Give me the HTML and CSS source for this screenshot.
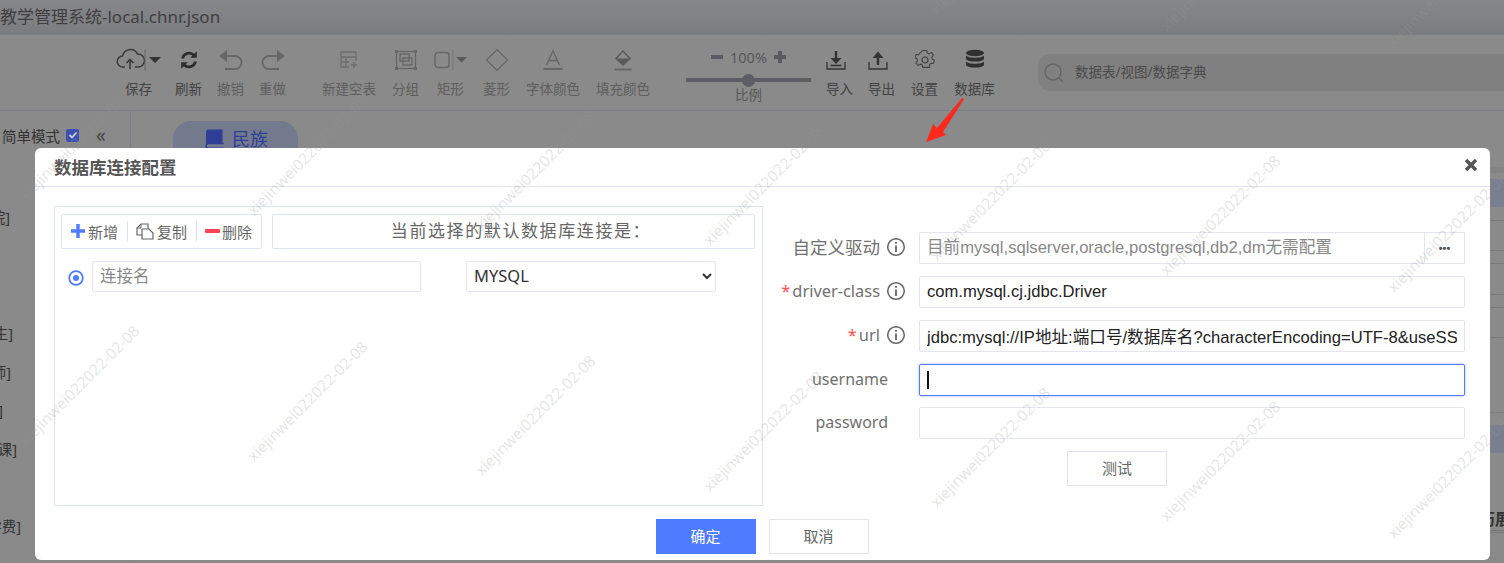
FILE: index.html
```html
<!DOCTYPE html>
<html lang="zh-CN">
<head>
<meta charset="utf-8">
<title>数据库连接配置</title>
<link rel="stylesheet" href="styles.css">
</head>
<body>
<div class="app">
  <header class="titlebar">教学管理系统-local.chnr.json</header>
  <section class="toolbar">
    <div class="tool tool-n strong">
      <span class="ico"><svg width="46" height="24" viewBox="0 0 46 24"><path d="M9 19H7a5.5 5.5 0 0 1-.5-11A8 8 0 0 1 21.5 6a6.5 6.5 0 0 1 1 13H19" fill="none" stroke="#3a3a3a" stroke-width="1.5"/><path d="M14 21v-9M10.5 15l3.5-3.5 3.5 3.5" fill="none" stroke="#3a3a3a" stroke-width="1.6"/><path d="M29 1.5v21" stroke="#666" stroke-width="1"/><path d="M33 9h12l-6 6z" fill="#333"/></svg></span>保存
    </div>
    <div class="tool tool-n strong gap-23">
      <span class="ico"><svg width="20" height="20" viewBox="0 0 20 20"><path d="M3.5 8.5A6.8 6.8 0 0 1 15 5.2" fill="none" stroke="#2e2e2e" stroke-width="2.8"/><path d="M17.8 1.2v6.6h-6.6z" fill="#2e2e2e"/><path d="M16.5 11.5A6.8 6.8 0 0 1 5 14.8" fill="none" stroke="#2e2e2e" stroke-width="2.8"/><path d="M2.2 18.8v-6.6h6.6z" fill="#2e2e2e"/></svg></span>刷新
    </div>
    <div class="tool tool-n">
      <span class="ico"><svg width="26" height="22" viewBox="0 0 26 22"><path d="M2 7h15a6.5 6.5 0 0 1 0 13H7" fill="none" stroke="#666" stroke-width="1.8"/><path d="M9 1 1.5 7 9 13z" fill="#666"/></svg></span>撤销
    </div>
    <div class="tool tool-n">
      <span class="ico"><svg width="26" height="22" viewBox="0 0 26 22"><path d="M24 7H9a6.5 6.5 0 0 0 0 13h10" fill="none" stroke="#666" stroke-width="1.8"/><path d="M17 1l7.5 6L17 13z" fill="#666"/></svg></span>重做
    </div>
    <div class="tool tool-w gap-34">
      <span class="ico"><svg width="20" height="20" viewBox="0 0 20 20"><path d="M10 17H2V2h15v9M2 7h15M2 12h8M7 7v10" fill="none" stroke="#6e6e6e" stroke-width="1.3"/><path d="M15 12v6M12 15h6" stroke="#6e6e6e" stroke-width="1.4"/></svg></span>新建空表
    </div>
    <div class="tool tool-n">
      <span class="ico"><svg width="24" height="22" viewBox="0 0 24 22"><rect x="2.5" y="2.5" width="19" height="17" fill="none" stroke="#666" stroke-width="1.2"/><rect x="6" y="5" width="9" height="7" fill="none" stroke="#666" stroke-width="1.3"/><rect x="9" y="9" width="9" height="7" fill="none" stroke="#666" stroke-width="1.3"/><path d="M1 1h3v3H1zM20 1h3v3h-3zM1 18h3v3H1zM20 18h3v3h-3z" fill="#666"/></svg></span>分组
    </div>
    <div class="tool tool-n gap-18">
      <span class="ico"><svg width="34" height="22" viewBox="0 0 34 22"><rect x="1" y="3.5" width="14" height="15" rx="3" fill="none" stroke="#666" stroke-width="1.4"/><path d="M19 1v20" stroke="#777"/><path d="M22 8h11l-5.500 5.500z" fill="#5a5a5a"/></svg></span>矩形
    </div>
    <div class="tool tool-n gap-19">
      <span class="ico"><svg width="24" height="24" viewBox="0 0 24 24"><path d="M12 1.500 22.500 12 12 22.500 1.500 12z" fill="none" stroke="#666" stroke-width="1.2"/></svg></span>菱形
    </div>
    <div class="tool tool-w gap-15">
      <span class="ico"><svg width="22" height="22" viewBox="0 0 22 22"><path d="M4.500 16 11 2l6.500 14M6.500 11.500h9" fill="none" stroke="#666" stroke-width="1.4"/><path d="M1.500 20h19" stroke="#666" stroke-width="2"/></svg></span>字体颜色
    </div>
    <div class="tool tool-w gap-14">
      <span class="ico"><svg width="20" height="22" viewBox="0 0 20 22"><path d="M10 2 3 9.500l7 6.500 7-6.500z" fill="none" stroke="#5a5a5a" stroke-width="1.4"/><path d="M3.500 9.500h13L10 16z" fill="#5a5a5a"/><path d="M1.500 20.500h17" stroke="#666" stroke-width="2"/></svg></span>填充颜色
    </div>
    <div class="zoomer">
      <div class="zoom-top"><span class="zoom-sign"></span><span>100%</span><span class="zoom-sign zoom-plus"></span></div>
      <div class="slider"><span class="thumb"></span></div>
      <div class="zoom-label">比例</div>
    </div>
    <div class="tool tool-n strong">
      <span class="ico ico-left"><svg width="20" height="20" viewBox="0 0 20 20"><path d="M1 12v7h18v-7" fill="none" stroke="#333" stroke-width="1.3"/><path d="M10 1v8" stroke="#333" stroke-width="2.4"/><path d="M4.500 8h11L10 14z" fill="#333"/><path d="M4.500 15.500h11" stroke="#333" stroke-width="1.600"/></svg></span>导入
    </div>
    <div class="tool tool-n strong">
      <span class="ico ico-left"><svg width="20" height="20" viewBox="0 0 20 20"><path d="M1 12v7h18v-7" fill="none" stroke="#333" stroke-width="1.3"/><path d="M10 15V6" stroke="#333" stroke-width="2.400"/><path d="M4.500 8h11L10 1.500z" fill="#333"/></svg></span>导出
    </div>
    <div class="tool tool-n strong gap-16">
      <span class="ico"><svg width="20" height="20" viewBox="0 0 20 20"><path d="M8 1h4l.6 2.700 1.900.8 2.300-1.500 2.200 2.800-1.600 2.100.4 2.100 2.200 1-1.100 3.400-2.600-.2-1.400 1.600.3 2.600H8l-.6-2.500-1.900-.8-2.300 1.500L1 13.800l1.600-2.100-.4-2.100-2.200-1 1.100-3.400 2.600.2L5 3.800z" transform="translate(0 -.5) scale(.97)" fill="none" stroke="#444" stroke-width="1.100"/><circle cx="10" cy="10" r="3" fill="none" stroke="#444" stroke-width="1.200"/></svg></span>设置
    </div>
    <div class="tool tool-d strong gap-16">
      <span class="ico"><svg width="20" height="22" viewBox="0 0 20 22"><ellipse cx="10" cy="4" rx="9" ry="3.300" fill="#2f2f2f"/><path d="M1 6.500c2 3 16 3 18 0v3.500c-1 3.400-17 3.400-18 0z" fill="#2f2f2f"/><path d="M1 12.500c2 3 16 3 18 0V16c-1 3.400-17 3.400-18 0z" fill="#2f2f2f"/></svg></span>数据库
    </div>
    <div class="search">
      <svg width="22" height="22" viewBox="0 0 22 22"><circle cx="10" cy="10" r="8" fill="none" stroke="#666" stroke-width="1.400"/><path d="M16 16l4 4" stroke="#666" stroke-width="1.600"/></svg>
      <span>数据表/视图/数据字典</span>
    </div>
  </section>
  <main class="workspace">
    <aside class="sidebar">
      <div class="mode">
        <span class="mode-text">简单模式</span>
        <span class="check"><svg width="10" height="10" viewBox="0 0 10 10"><path d="M1.500 5 4 7.500 8.500 2.500" fill="none" stroke="#ccd" stroke-width="1.800"/></svg></span>
        <span class="fold">«</span>
      </div>
      <ul class="tree">
        <li><span class="clip c10">[学院]</span></li>
        <li></li>
        <li></li>
        <li><span class="clip c13">[学生]</span></li>
        <li><span class="clip c11">[教师]</span></li>
        <li><span class="clip c2">[班级]</span></li>
        <li><span class="clip c17">[选课]</span></li>
        <li></li>
        <li><span class="clip c21">[学费]</span></li>
      </ul>
    </aside>
    <div class="canvas">
      <div class="tab"><svg width="20" height="20" viewBox="0 0 20 20"><path d="M3.500 0.500H17.500V14H3.500A2.500 2.500 0 0 0 1 16V3a2.500 2.500 0 0 1 2.500-2.500z" fill="#2f3f95"/><path d="M18.500 14.500H3.500a2.300 2.300 0 0 0 0 4.800h15" fill="none" stroke="#2f3f95" stroke-width="1.500"/></svg>民族</div>
      <div class="node">
        <div class="node-head"></div>
        <div class="node-blue"></div>
        <div class="node-row r1"></div>
        <div class="node-row r2"></div>
        <div class="node-row r3"></div>
        <div class="node-row r4"></div>
        <div class="node-row r5"></div>
        <div class="node-row r6"></div>
        <div class="node-row r7"></div>
        <div class="node-blue b2"></div>
        <div class="node-title">历展</div>
      </div>
    </div>
  </main>
</div>

<svg class="arrow" width="40" height="48" viewBox="0 0 40 48"><path d="M37 1l2 1L18 35l3 3L1 45l7-18 4 4z" fill="#ff2a1c"/></svg>

<section class="modal">
  <header class="modal-head">
    <h2>数据库连接配置</h2>
    <svg class="close" width="14" height="14" viewBox="0 0 14 14"><path d="M2 2l10 10M12 2 2 12" stroke="#555" stroke-width="3.400"/></svg>
  </header>
  <div class="modal-body">
    <div class="panel">
      <div class="panel-top">
        <div class="actions">
          <span class="act"><svg width="14" height="14" viewBox="0 0 14 14"><path d="M7 0v14M0 7h14" stroke="#4f7bff" stroke-width="3.400"/></svg>新增</span>
          <i class="sep"></i>
          <span class="act"><svg width="18" height="17" viewBox="0 0 18 17"><path d="M6 12H1V5l4-4h7v5" fill="none" stroke="#666" stroke-width="1.200"/><path d="M5 1v4H1" fill="none" stroke="#666" stroke-width="1"/><path d="M6 6h7l4 4v6H6z" fill="#fff" stroke="#666" stroke-width="1.200"/></svg>复制</span>
          <i class="sep"></i>
          <span class="act act-del"><svg width="15" height="6" viewBox="0 0 15 6"><rect y="1" width="15" height="4" rx="1" fill="#ff4055"/></svg>删除</span>
        </div>
        <div class="current">当前选择的默认数据库连接是：</div>
      </div>
      <div class="conn">
        <svg class="radio" width="16" height="16" viewBox="0 0 16 16"><circle cx="8" cy="8" r="6.800" fill="none" stroke="#4f7bff" stroke-width="1.800"/><circle cx="8" cy="8" r="3" fill="#4f7bff"/></svg>
        <input class="field name" type="text" placeholder="连接名">
        <select class="field db"><option>MYSQL</option></select>
      </div>
    </div>
    <form class="form">
      <div class="row first">
        <label class="cjk">自定义驱动</label>
        <svg class="info" width="20" height="20" viewBox="0 0 20 20"><use href="#i"/></svg>
        <div class="group">
          <input class="field grow" type="text" placeholder="目前mysql,sqlserver,oracle,postgresql,db2,dm无需配置">
          <button class="more" type="button">•••</button>
        </div>
      </div>
      <div class="row">
        <label><em>*</em>driver-class</label>
        <svg class="info" width="20" height="20" viewBox="0 0 20 20"><use href="#i"/></svg>
        <input class="field grow" type="text" value="com.mysql.cj.jdbc.Driver">
      </div>
      <div class="row">
        <label><em>*</em>url</label>
        <svg class="info" width="20" height="20" viewBox="0 0 20 20"><use href="#i"/></svg>
        <input class="field grow" type="text" value="jdbc:mysql://IP地址:端口号/数据库名?characterEncoding=UTF-8&amp;useSSL=false&amp;useUnicode=true&amp;serverTimezone=UTC">
      </div>
      <div class="row">
        <label class="plain">username</label>
        <div class="field grow focus"><span class="caret"></span></div>
      </div>
      <div class="row tight">
        <label class="plain">password</label>
        <input class="field grow" type="text">
      </div>
      <button class="btn test" type="button">测试</button>
    </form>
  </div>
  <footer class="modal-foot">
    <button class="btn primary" type="button">确定</button>
    <button class="btn" type="button">取消</button>
  </footer>
</section>

<svg class="marks" width="1504" height="563" viewBox="0 0 1504 563">
  <defs><g id="i"><circle cx="10" cy="10" r="8.300" fill="none" stroke="#666" stroke-width="1.500"/><path d="M10 8.500V15" stroke="#666" stroke-width="1.800"/><circle cx="10" cy="5.800" r="1.100" fill="#666"/></g></defs>
  <text transform="translate(763 -60) rotate(-45)">xiejinwei022022-02-08</text>
  <text transform="translate(990 -45) rotate(-45)">xiejinwei022022-02-08</text>
  <text transform="translate(1220 -29) rotate(-45)">xiejinwei022022-02-08</text>
  <text transform="translate(1447 -13) rotate(-45)">xiejinwei022022-02-08</text>
  <text transform="translate(79 140) rotate(-45)">xiejinwei022022-02-08</text>
  <text transform="translate(307 155) rotate(-45)">xiejinwei022022-02-08</text>
  <text transform="translate(535 170) rotate(-45)">xiejinwei022022-02-08</text>
  <text transform="translate(763 185) rotate(-45)">xiejinwei022022-02-08</text>
  <text transform="translate(990 200) rotate(-45)">xiejinwei022022-02-08</text>
  <text transform="translate(1220 215) rotate(-45)">xiejinwei022022-02-08</text>
  <text transform="translate(1447 232) rotate(-45)">xiejinwei022022-02-08</text>
  <text transform="translate(79 385) rotate(-45)">xiejinwei022022-02-08</text>
  <text transform="translate(307 401) rotate(-45)">xiejinwei022022-02-08</text>
  <text transform="translate(535 415) rotate(-45)">xiejinwei022022-02-08</text>
  <text transform="translate(763 431) rotate(-45)">xiejinwei022022-02-08</text>
  <text transform="translate(990 447) rotate(-45)">xiejinwei022022-02-08</text>
  <text transform="translate(1220 461) rotate(-45)">xiejinwei022022-02-08</text>
  <text transform="translate(1447 478) rotate(-45)">xiejinwei022022-02-08</text>
</svg>
</body>
</html>
```
FILE: styles.css
```css
* { box-sizing: border-box; }
html, body { margin: 0; height: 563px; overflow: hidden; }
body {
  position: relative;
  font-family: "Noto Sans", "Noto Sans CJK SC", sans-serif;
  background: #8a8a8a;
  color: #333;
}
.app { width: 1504px; height: 563px; display: flex; flex-direction: column; overflow: hidden; }

.titlebar {
  height: 35px;
  line-height: 33px;
  font-size: 17px;
  color: #3f3f42;
  background: linear-gradient(#86878b, #7b7c7e);
  flex: none;
}
.toolbar {
  height: 76px;
  flex: none;
  display: flex;
  align-items: flex-start;
  gap: 15px;
  padding: 13px 0 0 125px;
  border-bottom: 1px solid #7d7d86;
  background: #8a8a8a;
}
.tool {
  display: flex;
  flex-direction: column;
  align-items: center;
  font-size: 13.500px;
  line-height: 18px;
  color: #5e5e5e;
  flex: none;
  white-space: nowrap;
}
.tool.strong { color: #424242; }
.tool-n { width: 27px; }
.tool-w { width: 56px; }
.tool-d { width: 41px; }
.ico { height: 32px; display: flex; align-items: center; justify-content: center; padding-bottom: 9px; }
.ico-left { margin-left: -8px; }
.gap-14 { margin-left: -1px; }
.gap-15 { margin-left: 0; }
.gap-16 { margin-left: 1px; }
.gap-18 { margin-left: 3px; }
.gap-19 { margin-left: 4px; }
.gap-23 { margin-left: 8px; }
.gap-34 { margin-left: 20px; }

.zoomer {
  width: 125px;
  margin-left: 20px;
  flex: none;
  display: flex;
  flex-direction: column;
  align-items: center;
  color: #585858;
  font-size: 14.500px;
}
.zoom-top { height: 18px; display: flex; align-items: center; gap: 7px; line-height: 18px; }
.zoom-sign { width: 12px; height: 3.500px; background: #5a5a60; position: relative; }
.zoom-plus::after { content: ""; position: absolute; left: 4.250px; top: -4.250px; width: 3.500px; height: 12px; background: #5a5a60; }
.slider { width: 125px; height: 4px; margin-top: 12px; background: #5d5d64; position: relative; }
.thumb { position: absolute; left: 56px; top: -4.500px; width: 13px; height: 13px; border-radius: 50%; background: #5d5d64; }
.zoom-label { margin-top: 4px; line-height: 18px; font-size: 13.500px; }

.search {
  margin-left: 28px;
  margin-top: 6px;
  width: 480px;
  height: 37px;
  flex: none;
  border-radius: 12px;
  background: #808080;
  display: flex;
  align-items: center;
  gap: 10px;
  padding-left: 5px;
  font-size: 13.500px;
  line-height: 34px;
  color: #4a4a4a;
}
.search span { margin-top: -2px; }

.workspace { flex: 1; display: flex; min-height: 0; }
.sidebar { width: 131px; flex: none; border-right: 1px solid #7d7d86; padding-top: 14px; }
.mode { display: flex; align-items: center; height: 20px; padding-left: 2px; font-size: 14.500px; color: #333; }
.mode-text { width: 64px; }
.check { width: 13px; height: 13px; border-radius: 2px; background: #3d50b0; display: flex; align-items: center; justify-content: center; }
.fold { margin-left: 17px; font-size: 19px; line-height: 20px; color: #444; }
.tree { list-style: none; margin: 62px 0 0; padding: 0; font-size: 14.500px; color: #333; }
.tree li { height: 38.670px; line-height: 20px; }
.clip { display: flex; justify-content: flex-end; overflow: hidden; white-space: nowrap; }
.c2 { width: 3px; }
.c10 { width: 10px; }
.c11 { width: 11px; }
.c13 { width: 13px; }
.c17 { width: 17px; }
.c21 { width: 21px; }

.canvas { flex: 1; position: relative; }
.tab {
  width: 125px;
  height: 50px;
  margin: 10px 0 0 42px;
  border-radius: 18px;
  background: #747a8e;
  display: flex;
  gap: 7px;
  padding: 8px 0 0 32px;
  font-size: 18px;
  line-height: 20px;
  color: #2f3f95;
}
.node { position: absolute; left: 1358px; top: 56px; width: 20px; height: 400px; }
.node-head { height: 6px; background: #848484; }
.node-blue { height: 28px; margin-top: 6px; background: #7a7f90; }
.node-row { height: 1px; background: #7a7a7a; }
.r1 { margin-top: 13px; }
.r2 { margin-top: 29px; }
.r3 { margin-top: 12px; }
.r4 { margin-top: 30px; }
.r5 { margin-top: 12px; }
.r6 { margin-top: 29px; }
.r7 { margin-top: 74px; background: #808080; }
.b2 { margin-top: 12px; }
.node-title { margin: 55px 0 0 -10px; font-size: 16px; font-weight: 700; line-height: 22px; color: #333; border-bottom: 3px double #777; white-space: nowrap; }

.arrow { position: absolute; left: 925px; top: 97px; }

.modal {
  position: absolute;
  left: 35px;
  top: 148px;
  width: 1455px;
  height: 412px;
  background: #fff;
  border-radius: 6px;
  display: flex;
  flex-direction: column;
}
.modal-head {
  height: 39px;
  flex: none;
  border-bottom: 1px solid #e3e3f0;
  display: flex;
  align-items: center;
  justify-content: space-between;
  padding: 0 12px 0 19px;
}
.modal-head h2 { margin: 0; font-size: 17.500px; line-height: 40px; font-weight: 700; color: #555; }
.close { margin-bottom: 4px; }
.modal-body { display: flex; padding: 19px 25px 0 19px; height: 320px; flex: none; }
.panel { width: 709px; height: 300px; flex: none; border: 1px solid #dde3ec; padding: 7px 6px; }
.panel-top { display: flex; gap: 10px; }
.actions {
  width: 201px;
  height: 35px;
  flex: none;
  border: 1px solid #e0e3f0;
  border-radius: 2px;
  display: flex;
  align-items: center;
  padding: 0 0 1px 9px;
  font-size: 15px;
  color: #666;
}
.act { display: flex; align-items: center; gap: 3px; white-space: nowrap; }
.act-del { gap: 2px; }
.sep { width: 1px; height: 20px; background: #dde3ec; margin: 0 8px 0 9px; }
.current {
  width: 483px;
  height: 35px;
  border: 1px solid #e0e3f0;
  border-radius: 2px;
  text-align: center;
  line-height: 31px;
  font-size: 17px;
  letter-spacing: 1.600px;
  padding-left: 15px;
  color: #666;
}
.conn { display: flex; align-items: center; margin-top: 12px; padding-left: 7px; }
.radio { margin: 2px 8px 0 0; flex: none; }
.field {
  height: 31px;
  border: 1px solid #e3e6f0;
  border-radius: 2px;
  background: transparent;
  padding: 0 7px;
  font-family: "Liberation Sans", "Noto Sans CJK SC", sans-serif;
  font-size: 16.600px;
  color: #222;
  outline: none;
}
.field::placeholder { color: #888; opacity: 1; }
.name { width: 329px; padding-bottom: 2px; font-family: "Noto Sans", "Noto Sans CJK SC", sans-serif; font-size: 16.500px; }
.db { width: 250px; margin-left: 45px; padding: 0 3px 2px; font-family: "Noto Sans", "Noto Sans CJK SC", sans-serif; font-size: 16.500px; color: #333; }

.form { flex: 1; display: flex; flex-direction: column; }
.row { display: flex; align-items: center; height: 32px; margin-top: 12px; }
.row.first { margin-top: 26px; }
.row.tight { margin-top: 11px; }
.row label { width: 117px; flex: none; text-align: right; font-size: 16.400px; color: #707070; white-space: nowrap; margin-top: -3px; }
.row label.cjk { font-size: 17.500px; }
.row label em { color: #ff4d4f; font-style: normal; margin-right: 2px; }
.row label.plain { width: 125px; margin-right: 31px; font-size: 16px; }
.info { flex: none; margin: -2px 13px 0 6px; }
.grow { flex: 1; min-width: 0; height: 32px; text-overflow: clip; }
.group { flex: 1; display: flex; min-width: 0; height: 32px; }
.group .field { border-right: 0; border-radius: 2px 0 0 2px; }
.more { width: 41px; height: 32px; flex: none; border: 1px solid #e3e6f0; background: transparent; font-size: 11px; font-weight: 700; color: #555; padding: 0; }
.focus { border-color: #4f7bff; box-shadow: 0 0 2px 1px rgba(79,123,255,.25); display: flex; align-items: center; }
.caret { width: 2px; height: 18px; background: #111; }
.btn {
  width: 100px;
  height: 35px;
  border: 1px solid #e3e3ee;
  background: transparent;
  font-family: "Noto Sans", "Noto Sans CJK SC", sans-serif;
  font-size: 15px;
  color: #666;
  padding: 0 0 2px;
}
.test { align-self: flex-start; margin: 12px 0 0 304px; }
.modal-foot { display: flex; justify-content: center; gap: 13px; padding: 12px 0 0; margin-left: -1px; }
.primary { background: #4f7bff; border-color: #4f7bff; color: #fff; }

.marks { position: absolute; left: 0; top: 0; pointer-events: none; }
.marks text {
  font-family: "Noto Sans", sans-serif;
  font-size: 15.500px;
  text-anchor: middle;
  dominant-baseline: central;
  fill: rgba(150,150,150,.25);
}
```
